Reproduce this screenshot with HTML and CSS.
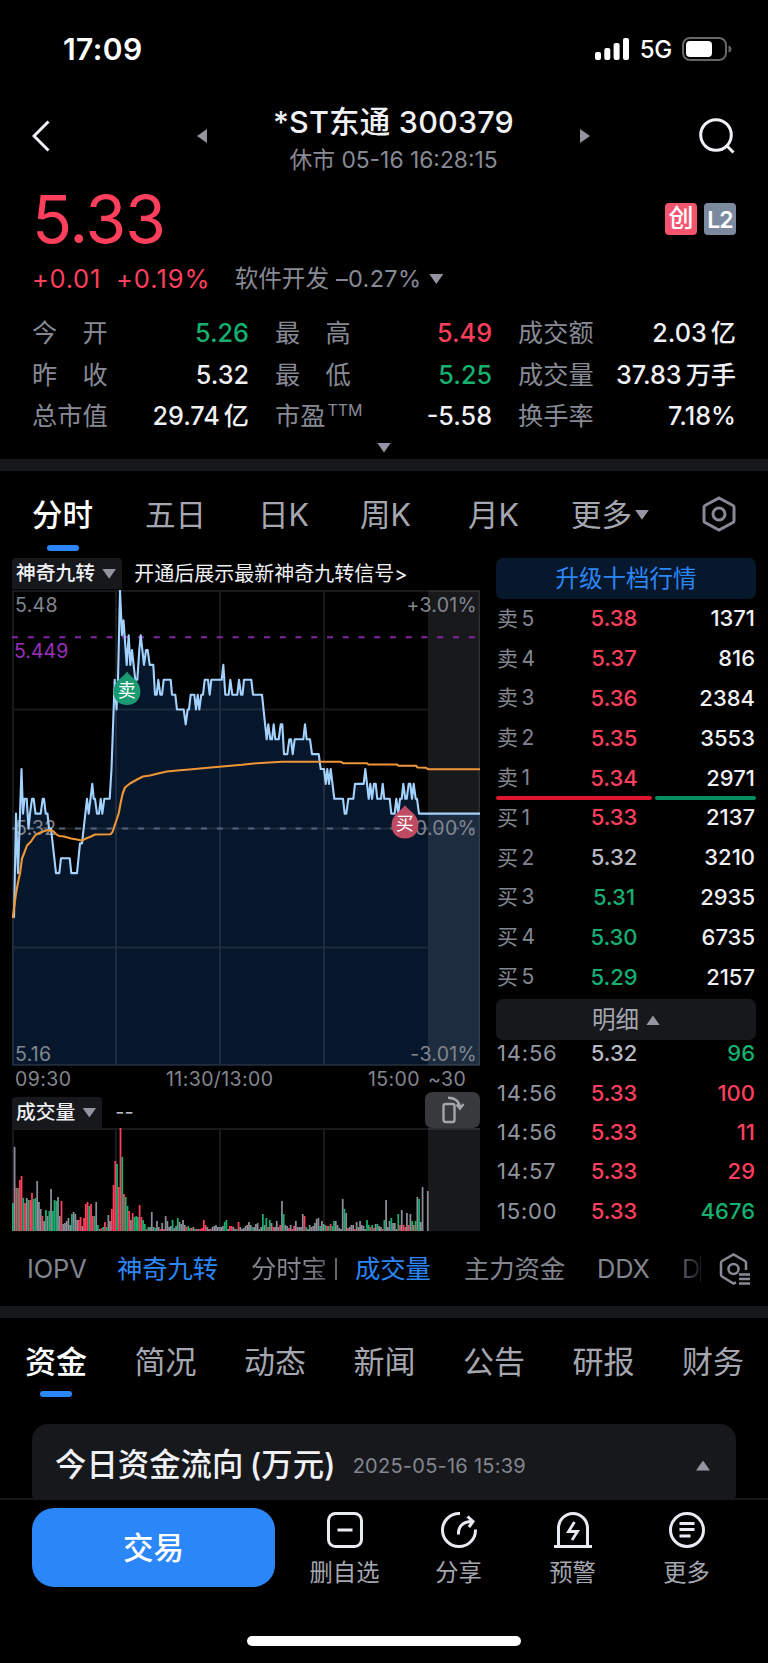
FILE: index.html
```
<!DOCTYPE html>
<html lang="zh-CN">
<head>
    <meta charset="UTF-8">
    <meta name="viewport" content="width=device-width, initial-scale=1.0">
    <title>*ST东通 300379</title>
    <link rel="stylesheet" href="styles.css">
</head>
<body>
    <div class="status-bar">
        <span class="clock">17:09</span>
        <div class="status-icons">
            <svg width="34" height="24" viewBox="0 0 34 24" fill="#fff">
                <rect x="0" y="15" width="6" height="8" rx="2"/>
                <rect x="9.3" y="11" width="6" height="12" rx="2"/>
                <rect x="18.6" y="6" width="6" height="17" rx="2"/>
                <rect x="28" y="1" width="6" height="22" rx="2"/>
            </svg>
            <span class="network">5G</span>
            <svg width="50" height="24" viewBox="0 0 50 24">
                <rect x="1" y="1" width="43" height="22" rx="7" fill="none" stroke="#66666a" stroke-width="2"/>
                <rect x="4" y="4" width="26" height="16" rx="4" fill="#fff"/>
                <path d="M46.5 8.500q3 1 3 3.500t-3 3.500z" fill="#66666a"/>
            </svg>
        </div>
    </div>

    <header class="nav">
        <svg width="18" height="32" viewBox="0 0 18 32"><path d="M16.500 1.500L2 16l14.500 14.500" fill="none" stroke="#f0f1f5" stroke-width="3"/></svg>
        <i class="tri left"></i>
        <div class="nav-title">
            <h1>*ST东通 300379</h1>
            <p>休市 05-16 16:28:15</p>
        </div>
        <i class="tri right"></i>
        <svg class="search" width="36" height="36" viewBox="0 0 36 36" fill="none" stroke="#f0f1f5" stroke-width="3"><circle cx="17" cy="17" r="15.300"/><path d="M27 27l7.500 7.500"/></svg>
    </header>

    <section class="quote">
        <div class="price-row">
            <span class="price">5.33</span>
            <span class="badge badge-red">创</span>
            <span class="badge badge-gray">L2</span>
        </div>
        <div class="change-row">
            <span class="change">+0.01</span>
            <span class="percent">+0.19%</span>
            <span class="sector">软件开发</span>
            <span class="sector-change">–0.27%</span>
            <i class="tri down"></i>
        </div>
        <div class="stats">
            <span>今　开</span><b class="green">5.26</b>
            <span>最　高</span><b class="red">5.49</b>
            <span>成交额</span><b>2.03<em>亿</em></b>
            <span>昨　收</span><b>5.32</b>
            <span>最　低</span><b class="green">5.25</b>
            <span>成交量</span><b>37.83<em>万手</em></b>
            <span>总市值</span><b>29.74<em>亿</em></b>
            <span>市盈<sup>TTM</sup></span><b>-5.58</b>
            <span>换手率</span><b>7.18%</b>
        </div>
        <div class="expand"><i class="tri down"></i></div>
    </section>

    <nav class="period-tabs">
        <span class="active">分时</span>
        <span>五日</span>
        <span>日K</span>
        <span>周K</span>
        <span>月K</span>
        <span>更多<i class="tri down"></i></span>
        <svg width="34" height="36" viewBox="0 0 34 36" fill="none" stroke="#878a94" stroke-width="3"><path d="M17 2L31 9.500Q32 10 32 11.500V24.500Q32 26 31 26.500L17 34 3 26.500Q2 26 2 24.500V11.500Q2 10 3 9.500Z"/><circle cx="17" cy="18" r="6"/></svg>
    </nav>

    <main class="market">
        <div class="charts">
            <div class="chart-head">
                <span class="chip">神奇九转<i class="tri down"></i></span>
                <span class="tip">开通后展示最新神奇九转信号&gt;</span>
            </div>
            <svg class="price-chart" width="468" height="476" viewBox="12 589.500 468 476">
                <path id="area" class="area"/>
                <rect class="after-hours" x="428" y="590" width="52" height="475"/>
                <path class="grid" d="M12 590.500H480M12 709H428M12 828H428M12 947H428M12 1064.500H480M13 590V1065M116 590V1065M220 590V1065M324 590V1065M479.500 590V1065"/>
                <path class="zero-line" d="M12 828H480"/>
                <path class="cost-line" d="M12 636.700H480"/>
                <text x="15" y="834.500">5.32</text>
                <polyline id="price-line" class="price-line"/>
                <polyline id="avg-line" class="avg-line"/>
                <text x="15" y="611.500">5.48</text>
                <text x="14" y="657.500" class="cost-text">5.449</text>
                <text x="15" y="1060">5.16</text>
                <text x="477" y="611.500" class="end">+3.01%</text>
                <text x="477" y="834.500" class="end">0.00%</text>
                <text x="477" y="1060" class="end">-3.01%</text>
                <path d="M127 671Q129 674 135 679C144 687 142 704.500 127 704.500S110 687 119 679Q125 674 127 671Z" fill="#199a70"/>
                <text x="127" y="696" class="marker">卖</text>
                <path d="M405 804.500Q407 807.500 413 812.500C422 820.500 420 838 405 838S388 820.500 397 812.500Q403 807.500 405 804.500Z" fill="#c04c63"/>
                <text x="405" y="829.500" class="marker">买</text>
            </svg>
            <div class="axis">
                <span>09:30</span>
                <span>11:30/13:00</span>
                <span>15:00</span>
                <span>~30</span>
            </div>
            <div class="volume-head">
                <span class="chip">成交量<i class="tri down"></i></span>
                <span class="empty">--</span>
                <span class="rotate">
                    <svg width="24" height="28" viewBox="0 0 24 28" fill="none" stroke="#a4a6ad" stroke-width="2.400"><rect x="2.500" y="8" width="11" height="18" rx="2"/><path d="M7 1.800Q18 2 19 12M15.500 8.500l3.500 4 3.500-4.500"/></svg>
                </span>
            </div>
            <svg class="volume-chart" width="468" height="103" viewBox="12 1128 468 103">
                <rect class="after-hours" x="428" y="1128" width="52" height="103"/>
                <path class="grid" d="M12 1129H480M13 1129V1231M116 1129V1231M220 1129V1231M324 1129V1231"/>
                <g id="volume"></g>
            </svg>
        </div>

        <aside class="book">
            <div class="upgrade">升级十档行情</div>
            <div class="levels asks">
                <div><span>卖 5</span><b class="red">5.38</b><b>1371</b></div>
                <div><span>卖 4</span><b class="red">5.37</b><b>816</b></div>
                <div><span>卖 3</span><b class="red">5.36</b><b>2384</b></div>
                <div><span>卖 2</span><b class="red">5.35</b><b>3553</b></div>
                <div><span>卖 1</span><b class="red">5.34</b><b>2971</b></div>
            </div>
            <div class="ratio"><i></i><i></i></div>
            <div class="levels bids">
                <div><span>买 1</span><b class="red">5.33</b><b>2137</b></div>
                <div><span>买 2</span><b class="flat">5.32</b><b>3210</b></div>
                <div><span>买 3</span><b class="green">5.31</b><b>2935</b></div>
                <div><span>买 4</span><b class="green">5.30</b><b>6735</b></div>
                <div><span>买 5</span><b class="green">5.29</b><b>2157</b></div>
            </div>
            <div class="detail">明细<i class="tri up"></i></div>
            <div class="ticks">
                <div><span>14:56</span><b class="flat">5.32</b><b class="green">96</b></div>
                <div><span>14:56</span><b class="red">5.33</b><b class="red">100</b></div>
                <div><span>14:56</span><b class="red">5.33</b><b class="red">11</b></div>
                <div><span>14:57</span><b class="red">5.33</b><b class="red">29</b></div>
                <div><span>15:00</span><b class="red">5.33</b><b class="green">4676</b></div>
            </div>
        </aside>
    </main>

    <div class="indicators">
        <span>IOPV</span>
        <span class="on">神奇九转</span>
        <span class="cut">分时宝</span>
        <i class="sep"></i>
        <span class="on">成交量</span>
        <span>主力资金</span>
        <span>DDX</span>
        <span class="fade">D</span>
        <svg width="33" height="32" viewBox="0 0 33 32" fill="none" stroke="#878a94" stroke-width="2.500"><path d="M17 29.500L14.500 30.500 3 23.500Q2 23 2 21.500V10Q2 8.500 3 8L14.500 1.500 26 8Q27 8.500 27 10V17"/><circle cx="14.500" cy="16" r="5"/><path d="M20 21.500H31M20 26H31M20 30.500H31"/></svg>
    </div>

    <nav class="info-tabs">
        <span class="active">资金</span>
        <span>简况</span>
        <span>动态</span>
        <span>新闻</span>
        <span>公告</span>
        <span>研报</span>
        <span>财务</span>
    </nav>

    <section class="flow-card">
        <h2>今日资金流向 (万元)</h2>
        <time>2025-05-16 15:39</time>
        <i class="tri up"></i>
    </section>

    <footer class="toolbar">
        <button class="trade">交易</button>
        <div class="tool">
            <svg width="38" height="38" viewBox="0 0 38 38"><rect x="2.500" y="2.500" width="33" height="33" rx="7"/><path d="M11.500 19h15"/></svg>
            删自选
        </div>
        <div class="tool">
            <svg width="38" height="38" viewBox="0 0 38 38"><path d="M20 2.600A16.500 16.500 0 1 0 35.500 18.500"/><path d="M18.500 23.500Q18 11 32 10.500M27.500 5.500l5.500 5-4 5.500"/></svg>
            分享
        </div>
        <div class="tool">
            <svg width="38" height="38" viewBox="0 0 38 38"><path d="M4.500 35V17a14.500 14.500 0 0 1 29 0V35M0 35.500H38"/><path d="M20.500 11L14.500 20.500H23.500L18 29" stroke-width="2.800"/></svg>
            预警
        </div>
        <div class="tool">
            <svg width="38" height="38" viewBox="0 0 38 38"><circle cx="19" cy="19" r="16.500"/><path d="M11.500 12.500H26.500M11.500 18.500H26.500M11.500 25H22.500"/></svg>
            更多
        </div>
    </footer>
    <div class="home-bar"></div>

    <script src="chart.js"></script>
</body>
</html>
```
FILE: styles.css
```
* {
    box-sizing: border-box;
}

body {
    margin: 0;
    width: 768px;
    height: 1663px;
    overflow: hidden;
    background-color: #000;
    color: #f0f1f5;
    font-family: Inter, "Noto Sans CJK SC", sans-serif;
    line-height: 1;
}

h1, h2, p {
    margin: 0;
    font-weight: 400;
}

b {
    font-weight: 500;
}

i, em {
    font-style: normal;
}

svg {
    display: block;
    flex: none;
}

span, b, time {
    white-space: nowrap;
}

.red { color: #ff3f5c; }
.green { color: #16b070; }
.flat { color: #b9bbc4; }

/* triangles */
.tri {
    display: inline-block;
    flex: none;
    width: 14px;
    height: 10px;
    background-color: #9396a1;
}

.tri.down { clip-path: polygon(0 0, 100% 0, 50% 100%); }
.tri.up { clip-path: polygon(0 100%, 100% 100%, 50% 0); }
.tri.left, .tri.right { width: 10px; height: 14px; }
.tri.left { clip-path: polygon(100% 0, 100% 100%, 0 50%); }
.tri.right { clip-path: polygon(0 0, 0 100%, 100% 50%); }

/* status bar */
.status-bar {
    display: flex;
    justify-content: space-between;
    align-items: center;
    height: 98px;
    padding: 0 36px 0 63px;
    color: #fff;
}

.clock {
    font-size: 30px;
    font-weight: 600;
    letter-spacing: 0.4px;
}

.status-icons {
    display: flex;
    align-items: center;
}

.network {
    margin: 2px 10px 0 11px;
    font-size: 24px;
    font-weight: 500;
    letter-spacing: -0.3px;
}

/* header */
.nav {
    display: flex;
    align-items: center;
    height: 76px;
    padding: 0 33px 0 32px;
}

.nav .tri.left { margin-left: 147px; }
.nav .search { margin-left: 109px; }

.nav-title {
    width: 374px;
    padding-top: 7px;
    text-align: center;
}

.nav-title h1 {
    font-size: 30.5px;
    font-weight: 500;
    line-height: 38px;
    letter-spacing: 0.2px;
}

.nav-title p {
    margin-top: 2px;
    color: #878a94;
    font-size: 22.8px;
    line-height: 34px;
}

/* quote */
.quote {
    height: 297px;
    padding: 6px 32px 0;
    border-bottom: 12px solid #17181c;
}

.price-row {
    display: flex;
    align-items: center;
    height: 78px;
}

.price {
    margin-right: auto;
    color: #ff3f5c;
    font-size: 66px;
    letter-spacing: -1px;
}

.badge {
    width: 32px;
    height: 32px;
    margin-left: 7px;
    border-radius: 4px;
    color: #fff;
    font-size: 25px;
    font-weight: 500;
    line-height: 31px;
    text-align: center;
}

.badge-red { background-color: #f5546e; }

.badge-gray {
    background-color: #7b8a9f;
    font-size: 23px;
    font-weight: 600;
    line-height: 34px;
    letter-spacing: -1px;
}

.change-row {
    display: flex;
    align-items: center;
    height: 42px;
    margin-bottom: 1px;
    color: #ff3f5c;
    font-size: 25.5px;
    letter-spacing: 0.7px;
}

.percent {
    margin-left: 15px;
    letter-spacing: 1px;
}

.sector {
    margin-left: 24px;
    color: #878a94;
    font-size: 23.6px;
    letter-spacing: 0;
}

.sector-change {
    margin: 0 8px 0 7px;
    color: #878a94;
    font-size: 23.5px;
    letter-spacing: 0.3px;
}

.stats {
    display: grid;
    grid-template-columns: 80px 137px 109px 134px 103px 141px;
    grid-auto-rows: 41.5px;
    align-items: center;
    margin-top: 13px;
    color: #878a94;
    font-size: 25.2px;
}

.stats span:nth-child(6n + 3),
.stats span:nth-child(6n + 5) {
    padding-left: 26px;
}

.stats b {
    color: #f0f1f5;
    text-align: right;
}

.stats b.red { color: #ff3f5c; }
.stats b.green { color: #16b070; }

.stats em {
    margin-left: 4px;
}

.stats sup {
    margin-left: 2px;
    font-size: 16px;
    line-height: 0;
}

.expand {
    display: flex;
    justify-content: center;
    margin-top: 5px;
}

/* period tabs */
.period-tabs {
    display: grid;
    grid-template-columns: 113px 113px 102px 108px 103px 131px 36px;
    align-items: center;
    height: 87px;
    padding: 1px 32px 0;
    color: #a5a7b0;
    font-size: 30.5px;
}

.period-tabs svg { margin-top: -3px; }

.active {
    position: relative;
    color: #fff;
    font-weight: 500;
}

.active::after {
    content: "";
    position: absolute;
    left: 15px;
    top: 45px;
    width: 32px;
    height: 6px;
    border-radius: 3px;
    background-color: #2b86f8;
}

.period-tabs .tri { margin: 0 0 6px 3px; }

/* charts and order book */
.market {
    display: flex;
    justify-content: space-between;
    height: 673px;
    padding: 0 12px;
}

.charts { width: 468px; }

.chart-head, .volume-head {
    display: flex;
    align-items: center;
}

.chart-head { height: 31.5px; }

.chip {
    display: flex;
    align-items: center;
    height: 31px;
    padding: 0 6px 0 4px;
    border-radius: 4px 4px 0 0;
    background-color: #17181c;
    font-size: 19.8px;
    font-weight: 500;
}

.chip .tri { margin-left: 7px; }

.tip {
    margin-left: 12px;
    font-size: 20px;
}

.area { fill: #06172b; }
.after-hours { fill: rgba(150, 155, 170, 0.16); }

.grid {
    fill: none;
    stroke: rgba(150, 155, 170, 0.16);
    stroke-width: 2;
}

.zero-line, .cost-line {
    stroke-width: 2;
    stroke-dasharray: 6 9.75;
}

.zero-line { stroke: #56627a; }
.cost-line { stroke: #8627a5; }

.price-line, .avg-line {
    fill: none;
    stroke: #a4d2ff;
    stroke-width: 2.1;
    stroke-linejoin: round;
}

.avg-line { stroke: #ee9638; }

.price-chart text {
    fill: #83868f;
    font-size: 19.5px;
    letter-spacing: 0.3px;
}

.price-chart .cost-text { fill: #9a30bb; letter-spacing: 0; }
.price-chart .end { text-anchor: end; }
.price-chart .marker { fill: #fff; font-size: 18px; text-anchor: middle; }

.axis {
    display: grid;
    grid-template-columns: 151px 202px 60px auto;
    align-items: center;
    height: 26.5px;
    padding: 2px 0 0 3px;
    color: #83868f;
    font-size: 19.5px;
    letter-spacing: 0.4px;
}

.volume-head { height: 36px; }
.volume-head .chip { margin-top: 5px; }

.empty {
    margin: 4px 0 0 13px;
    font-size: 20px;
    color: #b9bbc4;
}

.rotate {
    display: flex;
    align-items: center;
    justify-content: center;
    width: 55px;
    height: 36px;
    margin-left: auto;
    border-radius: 7px;
    background-color: #38393d;
}

.volume-chart .r { fill: #ff3f5c; }
.volume-chart .g { fill: #16b070; }
.volume-chart .n { fill: #8b8e98; }

.book {
    width: 260px;
    font-size: 22px;
}

.upgrade, .detail {
    display: flex;
    align-items: center;
    justify-content: center;
    height: 41px;
    border-radius: 7px;
    background-color: #07182c;
    color: #2b86f8;
    font-size: 23.5px;
}

.detail {
    background-color: #17181c;
    color: #a5a7b0;
}

.detail .tri { margin: 2px 0 0 7px; }

.levels div, .ticks div {
    display: grid;
    grid-template-columns: 77px 82px 100px;
    align-items: center;
    height: 39.8px;
}

.levels b, .ticks b { text-align: center; }
.levels b:last-child, .ticks b:last-child { text-align: right; }

.levels span {
    padding-left: 1px;
    color: #83868f;
    font-size: 21px;
    word-spacing: -2.5px;
}

.asks { margin-top: -0.5px; }

.ratio {
    display: grid;
    grid-template-columns: 156px 1fr;
    column-gap: 3px;
    height: 4px;
    margin-top: -1.5px;
}

.ratio i { border-radius: 2px; background-color: #e0142f; }
.ratio i:last-child { background-color: #078f61; }

.bids {
    margin-top: -2.5px;
    margin-bottom: 2.5px;
}

.ticks { margin-top: -6.5px; }
.ticks div { height: 39.4px; }

.ticks span {
    padding-left: 1px;
    color: #9396a1;
    letter-spacing: 0.8px;
}

/* indicator strip */
.indicators {
    display: grid;
    grid-template-columns: 90px 134px 86px 18px 109px 133px 85px 37px 33px;
    align-items: center;
    height: 87px;
    padding: 1px 0 0 27px;
    border-bottom: 12px solid #17181c;
    color: #83868f;
    font-size: 25.4px;
    letter-spacing: -0.1px;
}

.indicators .on { color: #2b86f8; }

.indicators .cut {
    background: linear-gradient(90deg, #83868f 65%, #55575e 88%);
    -webkit-background-clip: text;
    background-clip: text;
    color: transparent;
}

.sep {
    width: 2px;
    height: 22px;
    margin-left: -2px;
    background-color: #63656d;
}

/* last item fades out, the stem of the next letter still shows */
.fade {
    width: 19px;
    border-right: 1px solid #1c1d20;
    background: linear-gradient(90deg, #5c5e66, #1c1d20);
    -webkit-background-clip: text;
    background-clip: text;
    color: transparent;
}

/* info tabs */
.info-tabs {
    display: grid;
    grid-template-columns: repeat(7, 109.5px);
    align-items: center;
    height: 106px;
    padding: 0 0 20px 25px;
    color: #a5a7b0;
    font-size: 31px;
}

/* money flow */
.flow-card {
    display: flex;
    align-items: center;
    height: 74px;
    margin: 0 32px;
    padding: 9px 26px 0 23px;
    border-radius: 16px 16px 3px 3px;
    background-color: #17181c;
}

.flow-card h2 {
    font-size: 31.4px;
    font-weight: 500;
    word-spacing: -2px;
}

.flow-card time {
    margin: 0 auto 0 17px;
    color: #83868f;
    font-size: 20px;
    letter-spacing: 0.25px;
}

/* bottom toolbar */
.toolbar {
    display: grid;
    grid-template-columns: 243px 139px 89px 139px 89px;
    height: 138px;
    padding: 8px 0 0 32px;
    border-top: 2px solid #17181c;
}

.trade {
    height: 79px;
    padding: 0 0 3px;
    border: none;
    border-radius: 22px;
    background-color: #2b86f8;
    color: #fff;
    font: 500 30.5px "Noto Sans CJK SC", sans-serif;
}

.tool {
    display: flex;
    flex-direction: column;
    align-items: center;
    padding-top: 3px;
    color: #a5a7b0;
    font-size: 23.3px;
}

.tool svg {
    margin-bottom: 12px;
    fill: none;
    stroke: #e9ebf2;
    stroke-width: 3;
}

.home-bar {
    width: 274px;
    height: 10px;
    margin: 0 auto;
    border-radius: 5px;
    background-color: #fff;
}
```
FILE: chart.js
```
// price in cents at each x on the time axis
const prices = [
    [14, 526], [16, 533], [18, 529], [19.500, 532], [21.500, 536], [23, 533], [24.500, 534], [26.700, 534], [28.500, 532], [30, 533],
    [32, 534], [33.700, 534], [35.500, 533], [40.700, 533], [42.700, 534], [44, 534], [45.700, 533], [47.500, 533], [49, 532], [51, 532],
    [56, 529], [59.300, 529], [61, 530], [69.700, 530], [71.300, 529], [77, 529], [80, 531], [82, 531], [87, 534], [88.700, 533],
    [92.300, 535], [93.700, 534], [95, 534], [97, 533], [99, 533], [100.700, 534], [102.300, 533], [104.300, 534], [109.700, 534], [111.500, 536],
    [114.700, 542], [116.500, 540], [118, 542], [120, 548], [122, 545], [123.500, 546], [126.700, 543], [128.700, 545], [130.300, 543], [132, 544],
    [135.300, 542], [137.300, 542], [139.300, 544], [140.700, 545], [144, 543], [146, 544], [147.700, 544], [149.700, 543], [153.300, 543],
    [155, 541], [156.700, 541], [158.300, 542], [160.300, 541], [162, 541], [163.700, 542], [170.700, 542], [172, 541], [175.300, 541],
    [177, 540], [183.700, 540], [185.700, 539], [187.700, 540], [189, 540], [190.700, 541], [194.300, 541], [196, 540], [197.700, 541],
    [199.300, 540], [201.300, 541], [203, 541], [204.700, 542], [208, 542], [209.700, 541], [211.300, 542], [221.700, 542], [223.300, 543],
    [225.300, 541], [228.700, 541], [230.300, 542], [232.300, 541], [237.300, 541], [239, 542], [241, 541], [242.500, 541], [244, 542],
    [251.300, 542], [253, 541], [262, 541], [266.700, 538], [268.300, 539], [270.300, 538], [272, 538], [273.700, 539], [275.300, 538],
    [278.700, 538], [280.700, 539], [282.300, 539], [284, 537], [287.300, 537], [289.300, 538], [291, 538], [292.700, 537], [294.700, 538],
    [303.300, 538], [305, 539], [306.700, 538], [310, 538], [312, 537], [318.700, 537], [320.700, 536], [324, 536], [325.700, 535],
    [327.300, 536], [329, 535], [330.700, 536], [334.300, 534], [343, 534], [344.700, 533], [346.300, 533], [348.300, 534], [353.300, 534],
    [355, 535], [363.700, 535], [365.300, 536], [368.700, 534], [370.300, 535], [372, 534], [374, 535], [375.700, 535], [377.300, 534],
    [381, 534], [382.700, 535], [384.300, 534], [389.700, 534], [391.300, 533], [394.700, 533], [396.300, 534], [398.300, 533], [400, 534],
    [401.700, 534], [403.300, 535], [405.300, 534], [406.700, 534], [408.700, 535], [410.300, 535], [412, 534], [413.700, 535],
    [415.700, 534], [417, 534], [419, 533], [480, 533]
];

// average price line, in chart units
const average = "12.700,917.700 16,893 18,882 20,873 22,858 24,853 27,845 31,841 35,835 38,833 43,831 48,829.500 53,830.500 " +
    "56,833.500 59,835.500 64,836 71,838 77,839 82,840 86,838 91,836 95,834 110.700,833.700 112.700,831 116,821 118.700,813 " +
    "120.700,802 122.700,793 125,787 130,783 137,779 143,776 150,775 158,773 167,771 177,770 192,768.700 208,767.300 " +
    "225,765.700 242,764.300 257,762.700 282,761.300 341,761.300 343,762.700 367,762.700 368.500,764 397,764 398.500,765.300 " +
    "416,765.300 417.500,767 426,767.300 428,768.700 480,768.700";

// one bar a minute: r = up, g = down, n = unchanged
const volumes = ("g28 n84 r43 g43 r51 r55 g33 r28 n33 g31 r31 r38 g32 g33 n50 n29 n22 r15 n10 g21 n15 g20 n42 g20 g31 g30 n34 n15 r30 n7 " +
    "n8 n10 n13 n6 g17 n19 n17 n11 r11 r14 n5 r13 r27 r29 g25 r27 r15 g15 n29 g6 n2 r3 g4 r9 g4 n16 n10 r22 r46 r70 " +
    "g67 r44 r103 g74 r37 g34 g25 r20 n11 r18 g14 g15 g14 r26 r14 g11 g7 r2 g4 n4 n19 n4 g3 n10 n4 r2 n8 r2 n15 n10 " +
    "n4 n5 g11 n3 n5 g13 n9 n7 n11 n6 r4 g5 g3 r3 n4 g2 r2 n2 r2 r3 r11 r6 n4 n2 r2 n4 n5 n6 n4 n4 " +
    "n4 n5 g9 g11 n2 r5 r5 n4 n2 g2 r9 n4 n2 n3 n5 n6 n9 n6 g4 n4 n7 n8 n2 n4 g17 n6 g13 r4 g11 n8 " +
    "r4 n4 n10 n4 r6 n30 g17 n6 n5 r3 n6 n2 r5 n10 n4 n4 n4 n17 r15 g4 n2 n6 n4 n5 n8 n12 n13 g5 n10 n7 " +
    "g6 r5 g5 r7 g5 g10 n10 n6 n3 n2 n32 g22 n18 r3 n4 n6 n6 r2 n9 n4 n10 n6 n5 n2 g11 g6 r4 g6 r3 n7 " +
    "g7 n5 n4 r2 g11 n31 n4 n10 g13 n8 n8 n2 g17 r6 n21 r6 r4 n18 r6 n17 g10 r6 g10 n34 g32 n9 n44 n0 n0 n40").split(" ");

const points = prices.map(([x, p]) => `${x},${(828 - (p - 532) * 14.870).toFixed(1)}`);
document.getElementById("price-line").setAttribute("points", points.join(" "));
document.getElementById("area").setAttribute("d", `M${points.join("L")}V1065H12V917Z`);
document.getElementById("avg-line").setAttribute("points", average);

const group = document.getElementById("volume");
volumes.forEach((v, i) => {
    const bar = document.createElementNS("http://www.w3.org/2000/svg", "rect");
    const height = Number(v.slice(1));
    bar.setAttribute("class", v[0]);
    bar.setAttribute("x", (12 + i * 1.736).toFixed(2));
    bar.setAttribute("y", 1231 - height);
    bar.setAttribute("width", 1.75);
    bar.setAttribute("height", height);
    group.appendChild(bar);
});
```
